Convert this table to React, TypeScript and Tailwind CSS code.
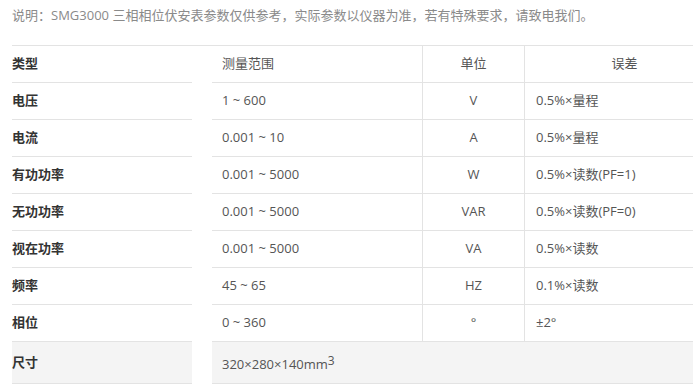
import React from "react";

const rows: [string, string, string, string][] = [
  ["电压", "1 ~ 600", "V", "0.5%×量程"],
  ["电流", "0.001 ~ 10", "A", "0.5%×量程"],
  ["有功功率", "0.001 ~ 5000", "W", "0.5%×读数(PF=1)"],
  ["无功功率", "0.001 ~ 5000", "VAR", "0.5%×读数(PF=0)"],
  ["视在功率", "0.001 ~ 5000", "VA", "0.5%×读数"],
  ["频率", "45 ~ 65", "HZ", "0.1%×读数"],
  ["相位", "0 ~ 360", "°", "±2°"],
];

export default function App() {
  return (
    <div
      className="w-[693px] h-[387px] overflow-hidden bg-white text-[13px]"
      style={{ fontFamily: "'Open Sans', 'Noto Sans CJK SC', sans-serif" }}
    >
      <div className="pl-[12px] pt-[5px] h-[45px] text-[#8a8a8a] leading-[20px]">
        说明：SMG3000 三相相位伏安表参数仅供参考，实际参数以仪器为准，若有特殊要求，请致电我们。
      </div>
      <div className="ml-[12px] w-[712px] border-t border-[#e3e3e3]">
        <div className="flex h-[37px]">
          <div className="w-[180px] shrink-0 flex items-center font-bold text-[#333] border-b border-[#e3e3e3]">类型</div>
          <div className="w-[20px] shrink-0" />
          <div className="w-[210px] shrink-0 flex items-center pl-[10px] text-[#555] border-b border-[#e3e3e3]">测量范围</div>
          <div className="w-[102px] shrink-0 flex items-center justify-center text-[#555] border-b border-l border-[#e3e3e3]">单位</div>
          <div className="w-[200px] shrink-0 flex items-center justify-center text-[#555] border-b border-l border-[#e3e3e3]">误差</div>
        </div>
        {rows.map((r) => (
          <div key={r[0]} className="flex h-[37px]">
            <div className="w-[180px] shrink-0 flex items-center font-bold text-[#333] border-b border-[#e3e3e3]">{r[0]}</div>
            <div className="w-[20px] shrink-0" />
            <div className="w-[210px] shrink-0 flex items-center pl-[10px] text-[#555] border-b border-[#e3e3e3]">{r[1]}</div>
            <div className="w-[102px] shrink-0 flex items-center justify-center text-[#555] border-b border-l border-[#e3e3e3]">{r[2]}</div>
            <div className="w-[200px] shrink-0 flex items-center pl-[11px] text-[#555] border-b border-l border-[#e3e3e3]">{r[3]}</div>
          </div>
        ))}
        <div className="flex h-[42px]">
          <div className="w-[180px] shrink-0 flex items-center font-bold text-[#333] bg-[#f4f4f4] border-b border-[#e3e3e3]">尺寸</div>
          <div className="w-[20px] shrink-0" />
          <div className="w-[512px] shrink-0 flex items-center pl-[10px] pt-[4px] text-[#555] bg-[#f4f4f4] border-b border-[#e3e3e3]">
            320×280×140mm<sup className="text-[12px] relative -top-[4px]">3</sup>
          </div>
        </div>
      </div>
    </div>
  );
}
